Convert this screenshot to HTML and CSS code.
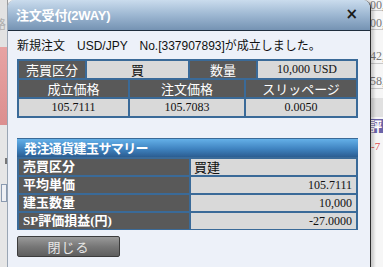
FILE: index.html
```html
<!DOCTYPE html>
<html lang="ja">
<head>
<meta charset="utf-8">
<link rel="stylesheet" href="styles.css">
</head>
<body>
<div class="page">
  <div class="bg-left">
    <div class="bl-top"><span class="bl-glyph">路</span></div>
    <div class="bl-pink"></div>
    <div class="bl-rest"><span class="bl-mark"></span><span class="bl-box"></span></div>
  </div>
  <div class="bg-mid"></div>
  <div class="bg-right">
    <div class="br-row br-r1">00,</div>
    <div class="br-row br-r2">00,</div>
    <div class="br-row br-r3">42,</div>
    <div class="br-row br-r4">58,</div>
    <div class="br-band"></div>
    <div class="br-purple">評</div>
    <div class="br-red">-7</div>
  </div>
</div>

<div class="dialog">
  <div class="titlebar">
    <span class="title">注文受付(2WAY)</span>
    <span class="close">×</span>
  </div>
  <div class="body">
    <p class="msg">新規注文　USD/JPY　No.[337907893]が成立しました。</p>

    <div class="grid-table">
      <div class="row row-a">
        <div class="cell dark">売買区分</div>
        <div class="cell light jp">買</div>
        <div class="cell dark">数量</div>
        <div class="cell light num">10,000 USD</div>
      </div>
      <div class="row row-b">
        <div class="cell dark">成立価格</div>
        <div class="cell dark">注文価格</div>
        <div class="cell dark">スリッページ</div>
      </div>
      <div class="row row-b">
        <div class="cell light num">105.7111</div>
        <div class="cell light num">105.7083</div>
        <div class="cell light num">0.0050</div>
      </div>
    </div>

    <div class="summary">
      <div class="sum-head">発注通貨建玉サマリー</div>
      <div class="sum-row">
        <div class="s-label">売買区分</div>
        <div class="s-val left">買建</div>
      </div>
      <div class="sum-row">
        <div class="s-label">平均単価</div>
        <div class="s-val">105.7111</div>
      </div>
      <div class="sum-row">
        <div class="s-label">建玉数量</div>
        <div class="s-val">10,000</div>
      </div>
      <div class="sum-row">
        <div class="s-label">SP評価損益(円)</div>
        <div class="s-val">-27.0000</div>
      </div>
    </div>

    <button class="btn">閉じる</button>
  </div>
</div>
</body>
</html>
```

FILE: styles.css
```css
* { box-sizing: border-box; }
html, body { margin: 0; padding: 0; }
body {
  width: 383px;
  height: 267px;
  overflow: hidden;
  position: relative;
  font-family: "Liberation Sans", "Noto Sans CJK JP", sans-serif;
  background: #f4f4f4;
}

/* underlying page */
.page {
  display: flex;
  height: 267px;
}
.bg-left {
  width: 8px;
  display: flex;
  flex-direction: column;
  border-right: 1px solid #9a9a9a;
}
.bl-top {
  height: 47px;
  background: #e2e2e2;
  overflow: hidden;
  position: relative;
}
.bl-glyph {
  display: block;
  margin: 15px 0 0 -6px;
  font-size: 12px;
  color: #b0b0b0;
  font-family: "Noto Sans CJK JP", sans-serif;
}
.bl-pink {
  height: 78px;
  background: linear-gradient(#e7a3a3, #dc8f8f);
}
.bl-rest {
  flex: 1;
  background: #e6e6e6;
  display: flex;
  flex-direction: column;
}
.bl-mark {
  width: 3px;
  height: 6px;
  margin: 33px 0 0 5px;
  background: #777;
}
.bl-box {
  width: 6px;
  height: 18px;
  margin: 20px 0 0 1px;
  border: 1px solid #8a9ab0;
  background: #eef0f4;
}
.bg-mid { flex: 1; }
.bg-right {
  width: 14px;
  background: #f6f6f6;
  display: flex;
  flex-direction: column;
  font-family: "Liberation Serif", serif;
  font-size: 12px;
  color: #777;
  overflow: hidden;
}
.br-row {
  padding-left: 1px;
  border-bottom: 1px solid #c8c8c8;
  line-height: 11px;
  white-space: nowrap;
}
.br-r1 { height: 11px; }
.br-r2 { height: 19px; padding-top: 7px; }
.br-r3 { height: 34px; padding-top: 21px; }
.br-r4 { height: 25px; padding-top: 12px; }
.br-band {
  height: 19px;
  margin-top: 9px;
  background: #e1e1e1;
}
.br-purple {
  height: 14px;
  margin-top: 2px;
  background: #6b63a8;
  color: #fff;
  font-family: "Noto Sans CJK JP", sans-serif;
  font-weight: bold;
  font-size: 13px;
  line-height: 14px;
}
.br-red {
  margin-top: 8px;
  color: #e05050;
  font-size: 11px;
  line-height: 10px;
  padding-left: 2px;
}

/* dialog window */
.dialog {
  position: absolute;
  left: 7px;
  top: 0;
  width: 364px;
  height: 280px;
  background: #edf1f9;
  border-left: 1px solid #9aa6b4;
  border-right: 1px solid #2c2c2c;
  border-radius: 8px 8px 0 0;
  box-shadow: 3px 0 3px rgba(0,0,0,0.18);
  overflow: hidden;
}
.titlebar {
  height: 31px;
  background: linear-gradient(#cadced, #9db7d2 50%, #7593b3);
  border-bottom: 1px solid #1f2d3d;
  display: flex;
  align-items: center;
  justify-content: space-between;
  padding: 0 12px 2px 8px;
}
.title {
  color: #fff;
  font-weight: bold;
  font-size: 13px;
  letter-spacing: -0.2px;
}
.close {
  color: #1a1a1a;
  font-weight: bold;
  font-size: 15px;
  font-family: "DejaVu Sans", sans-serif;
  line-height: 1;
}
.body {
  padding: 0 12px 0 9px;
  display: flex;
  flex-direction: column;
  align-items: flex-start;
}
.msg {
  margin: 8px 0 0 0;
  font-size: 12px;
  line-height: 14px;
  color: #111;
  white-space: nowrap;
}

/* transaction table */
.grid-table {
  margin-top: 6px;
  width: 341px;
  background: #3a6a98;
  padding: 2px;
  display: flex;
  flex-direction: column;
  gap: 2px;
}
.row { display: grid; gap: 2px; height: 17px; }
.row-a { grid-template-columns: 66px 101px 66px 1fr; }
.row-b { grid-template-columns: 109px 114px 1fr; }
.cell {
  display: flex;
  align-items: center;
  justify-content: center;
  font-family: "Noto Sans CJK JP", sans-serif;
  font-size: 13px;
  line-height: 17px;
}
.dark { background: #595959; color: #fff; }
.light { background: #d9d9d9; color: #111; }
.num {
  font-family: "Liberation Serif", serif;
  font-size: 12px;
}

/* summary */
.summary {
  margin-top: 20px;
  width: 341px;
  background: #3a6a98;
  padding: 1px 2px 1px 2px;
  display: flex;
  flex-direction: column;
  gap: 2px;
}
.sum-head {
  height: 18px;
  margin: 0 -2px;
  padding-left: 7px;
  background: linear-gradient(#64b0e8, #3f83c0 55%, #2b5d91);
  color: #fff;
  font-family: "Noto Sans CJK JP", sans-serif;
  font-weight: bold;
  font-size: 13px;
  line-height: 18px;
  letter-spacing: -0.6px;
}
.sum-row {
  display: grid;
  grid-template-columns: 170px 1fr;
  gap: 2px;
  height: 16px;
}
.s-label {
  background: #595959;
  color: #fff;
  font-family: "Liberation Serif", "Noto Sans CJK JP", serif;
  font-weight: bold;
  font-size: 13px;
  line-height: 16px;
  padding-left: 4px;
  white-space: nowrap;
}
.s-val {
  background: #d9d9d9;
  color: #111;
  font-family: "Liberation Serif", serif;
  font-size: 12px;
  line-height: 16px;
  text-align: right;
  padding-right: 4px;
}
.s-val.left {
  text-align: left;
  padding-left: 3px;
  font-family: "Noto Sans CJK JP", sans-serif;
  font-size: 13px;
}

.btn {
  margin-top: 6px;
  width: 103px;
  height: 21px;
  border: 1px solid #3c3c3c;
  border-radius: 2px;
  background: linear-gradient(#9a9a9a, #777 50%, #5e5e5e);
  color: #e8e8e8;
  font-family: "Noto Sans CJK JP", sans-serif;
  font-size: 13px;
  line-height: 19px;
  padding: 0;
  letter-spacing: 1px;
}
```
